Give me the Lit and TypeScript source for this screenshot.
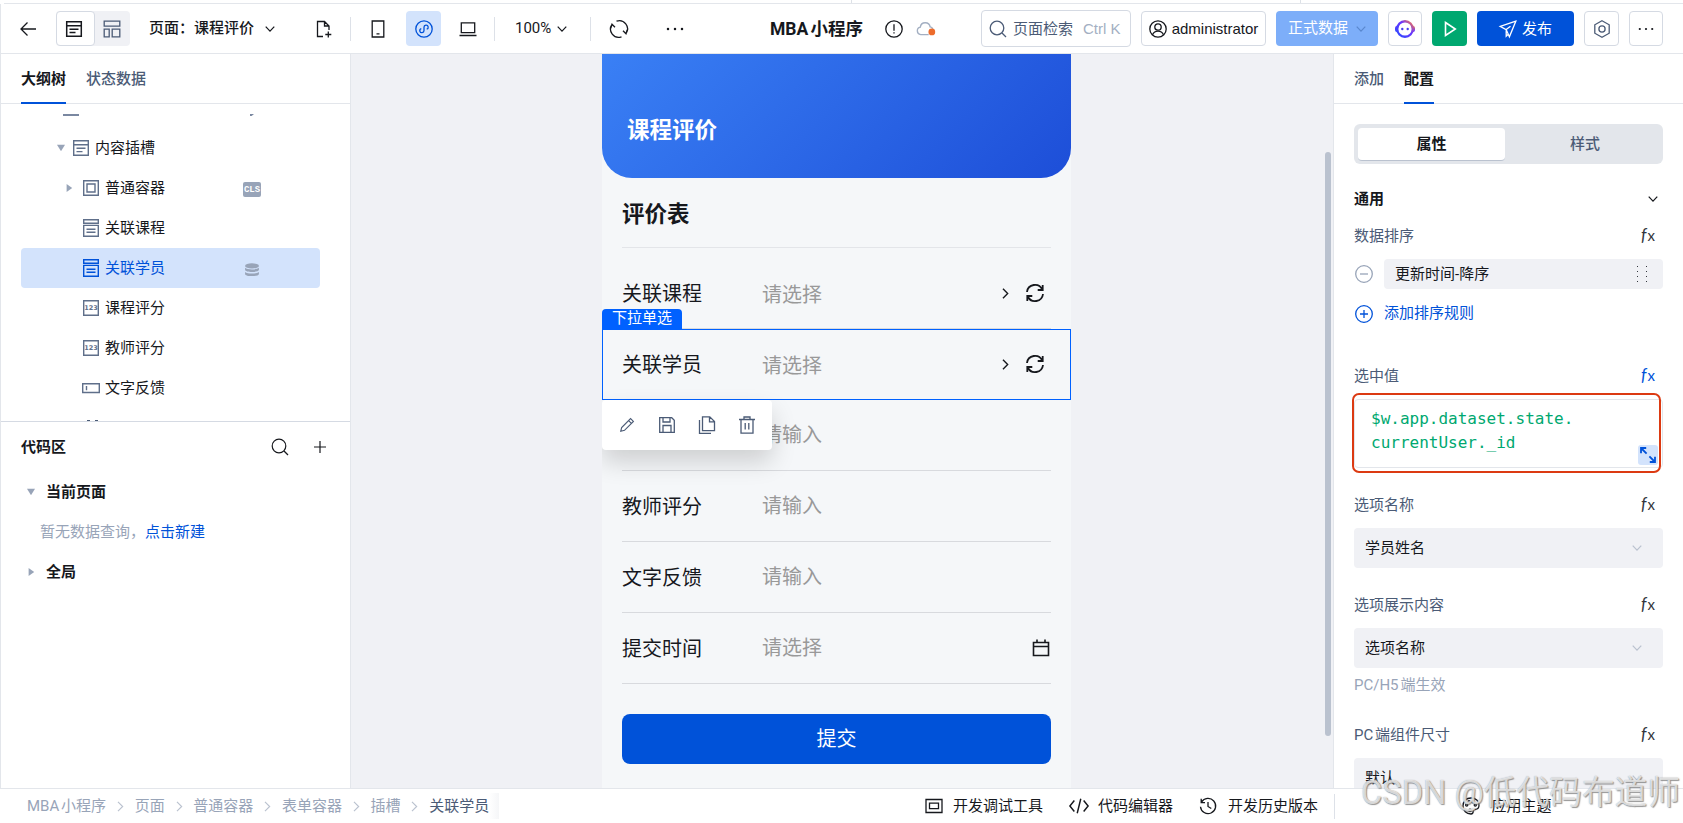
import { LitElement, html, svg, css } from "lit";
import { customElement, property } from "lit/decorators.js";
import { classMap } from "lit/directives/class-map.js";

const icons: Record<string, unknown> = {
  back: svg`<path d="M17 9H2M8.500 2.500L2 9l6.500 6.500" />`,
  doc: svg`<path d="M1.700 1.700h14.600v14.600H1.700zM1.700 5.700h14.600M4.500 9.200h9M4.500 12.600h6" />`,
  layout: svg`<path d="M1.200 1.200h15.600v5H1.200zM1.200 9.200h5v7.600h-5zM9.200 9.200h7.600v7.600H9.200z" />`,
  down: svg`<path d="M3.500 6l5.500 5.800L14.500 6" />`,
  right: svg`<path d="M5.500 2.500L12 9l-6.500 6.500" />`,
  newPage: svg`<path d="M8 16.500H2.500v-15h7L14 6v4M9.500 1.500V6H14M13.300 11.500v6M10.300 14.500h6" />`,
  phone: svg`<path d="M3.200 1h11.600v16H3.200zM7.500 13.800h3" />`,
  mini: svg`<circle cx="9" cy="9" r="8.200" /><path d="M6.300 8.600a2.100 2.100 0 1 0 2.700 2V7.200a2.100 2.100 0 1 1 2.700 2" />`,
  laptop: svg`<path d="M2.300 2.800h13.400v9.800H2.300zM.5 15.500h17" />`,
  sync: svg`<path d="M6.500 1.200A8.200 8.200 0 0 1 16 13.600M11.500 16.800A8.200 8.200 0 0 1 2 4.400M.8 8.200L2 4.200l3 3M17.200 9.800l-1.200 4-3-3" />`,
  dots: svg`<g fill="currentColor" stroke="none"><circle cx="2" cy="9" r="1.250" /><circle cx="9" cy="9" r="1.250" /><circle cx="16" cy="9" r="1.250" /></g>`,
  alert: svg`<circle cx="9" cy="9" r="8.200" /><path d="M9 4.300v6.400M9 12.200v1.300" />`,
  cloud: svg`<path d="M12 14.800H4.500a3.600 3.600 0 0 1-.4-7.100 4.700 4.700 0 0 1 9.300-.2 3.500 3.500 0 0 1 2.600 2" /><circle cx="15" cy="12.200" r="3.200" fill="#ed6c2c" stroke="none" />`,
  search: svg`<circle cx="8" cy="8" r="6.800" /><path d="M13 13l4 4" />`,
  user: svg`<circle cx="9" cy="9" r="8.200" /><circle cx="9" cy="7" r="3.200" /><path d="M3.500 14.800c1.200-2.600 3-3.600 5.500-3.600s4.300 1 5.500 3.600" />`,
  play: svg`<path d="M4.500 2.500L14.300 9l-9.800 6.500z" />`,
  send: svg`<path d="M16.800 1.200L1.200 6.300l6 3.300 3.200 7.200zM7.200 9.600l4.300-3.400M7.200 9.600v6.600l2-2" />`,
  hexagon: svg`<path d="M9 .8l7.200 4v8.400L9 17.200l-7.200-4V4.800z" /><circle cx="9" cy="9" r="3.100" />`,
  box: svg`<path d="M1.700 1.700h14.600v14.600H1.700zM5 5h8v8H5z" />`,
  select: svg`<path d="M1.700.7h14.600v3.500H1.700zM1.700 6.400h14.600v10.800H1.700zM4.500 10.200h9M4.500 13.200h9" />`,
  number: svg`<path d="M1.700 1.700h14.600v14.600H1.700z" /><text x="9" y="11.300" text-anchor="middle">123</text>`,
  input: svg`<path d="M.7 4.700h16.600v8.800H.7zM4.500 7v4.200" />`,
  db: svg`<g fill="currentColor" stroke="none"><ellipse cx="9" cy="4.400" rx="7.800" ry="2.900" /><path d="M1.200 6.600c2.500 2.500 13.100 2.500 15.600 0v2.200c0 3.300-15.600 3.300-15.600 0zM1.200 11.200c2.500 2.500 13.100 2.500 15.600 0v2.200c0 3.300-15.600 3.300-15.600 0z" /></g>`,
  plus: svg`<path d="M9 3v12M3 9h12" />`,
  refresh: svg`<path d="M1 8a8 8 0 0 1 15.200-2.500M17 10a8 8 0 0 1-15.200 2.500M16.700 1v5h-5M1.300 17v-5h5" />`,
  calendar: svg`<path d="M1.500 3.500h15v13h-15zM1.500 7.500h15M5 .5v3M13 .5v3" />`,
  pencil: svg`<path d="M2 16l1-4.200L13 1.800l3.200 3.200L6.200 15zM10.800 4l3.200 3.200" />`,
  save: svg`<path d="M1.700 1.700h12l2.600 2.600v12H1.700zM5 1.700V6h7V1.700M5 16.300V9.500h8v6.800" />`,
  copy: svg`<path d="M4.500.8h7.300l4.700 4.700v9.200h-12zM11.500.8v5h5M1.500 4v13.300h11.500" />`,
  trash: svg`<path d="M1 3.500h16M3 3.500v13.700h12V3.500M6 3.500V1h6v2.500M7.200 7v6.500M10.800 7v6.500" />`,
  minusCircle: svg`<circle cx="9" cy="9" r="8.300" /><path d="M5 9h8" />`,
  plusCircle: svg`<circle cx="9" cy="9" r="8.300" /><path d="M5 9h8M9 5v8" />`,
  expand: svg`<path d="M2 7.200V2h5.200M2 2l5.600 5.600M16 10.800V16h-5.200M16 16l-5.600-5.600" />`,
  monitor: svg`<path d="M1 2.500h16v13H1zM4.500 6.200h9v5.500h-9z" />`,
  code: svg`<path d="M4.800 4L.8 9l4 5M13.200 4l4 5-4 5M10.600 2.500l-3.200 13" />`,
  history: svg`<path d="M2.500 5.200a7.600 7.600 0 1 1-1 4.500M2.200 1.800v3.800h3.800M9 5v4.500l3.300 2" />`,
  palette: svg`<path d="M9 1c4.800 0 8 3 8 7.300 0 2.700-1.600 4-3.600 4-1.700 0-2.200.8-2.200 2 0 1.500-.5 2.700-2.200 2.700C4.300 17 1 13.600 1 9s3.200-8 8-8z" /><circle cx="4.700" cy="8" r="1.100" /><circle cx="7" cy="4.800" r="1.100" /><circle cx="11" cy="4.800" r="1.100" /><circle cx="13.300" cy="8" r="1.100" /><circle cx="8" cy="13.300" r="1.200" />`,
};

@customElement("app-icon")
export class AppIcon extends LitElement {
  @property({ type: String }) name = "";

  static styles = css`
    :host {
      display: inline-flex;
      width: 18px;
      height: 18px;
      flex: none;
    }

    svg {
      width: 100%;
      height: 100%;
      overflow: visible;
      fill: none;
      stroke: currentColor;
      stroke-width: var(--stroke, 1.3);
    }

    text {
      font: bold 6.5px "DejaVu Sans", sans-serif;
      fill: currentColor;
      stroke: none;
    }
  `;

  protected render() {
    return html`<svg viewBox="0 0 18 18">${icons[this.name]}</svg>`;
  }
}

interface TreeNode {
  label: string;
  icon: string;
  root?: boolean;
  arrow?: string;
  selected?: boolean;
  badge?: string;
}

const treeNodes: TreeNode[] = [
  { label: "内容插槽", icon: "doc", root: true, arrow: "open" },
  { label: "普通容器", icon: "box", arrow: "closed", badge: "cls" },
  { label: "关联课程", icon: "select" },
  { label: "关联学员", icon: "select", selected: true, badge: "db" },
  { label: "课程评分", icon: "number" },
  { label: "教师评分", icon: "number" },
  { label: "文字反馈", icon: "input" },
];

const formRows = [
  { label: "关联课程", hint: "请选择", kind: "select" },
  { label: "关联学员", hint: "请选择", kind: "select", selected: true },
  { label: "课程评分", hint: "请输入", kind: "input" },
  { label: "教师评分", hint: "请输入", kind: "input" },
  { label: "文字反馈", hint: "请输入", kind: "input" },
  { label: "提交时间", hint: "请选择", kind: "date" },
];

const crumbs = ["MBA小程序", "页面", "普通容器", "表单容器", "插槽", "关联学员"];

@customElement("app-root")
export class AppRoot extends LitElement {
  static styles = css`
    :host {
      display: flex;
      flex-direction: column;
      position: relative;
      width: 1683px;
      height: 823px;
      overflow: hidden;
      background: #fff;
      color: #16181d;
      font-family: Roboto, "Noto Sans CJK SC", sans-serif;
      font-size: 15px;
      line-height: 20px;
      white-space: nowrap;
      text-autospace: normal;
    }

    * {
      box-sizing: border-box;
    }

    /* header */
    .strip {
      display: flex;
      flex: none;
      height: 4px;
      margin-left: 4px;
      border-bottom: 1px solid #e3e6eb;
    }
    .strip span {
      height: 3px;
      border-right: 1px solid #dde1e7;
    }
    .strip .first {
      width: 848px;
    }
    .strip .second {
      width: 449px;
    }
    .header {
      display: flex;
      align-items: center;
      flex: none;
      height: 50px;
      padding: 0 20px 0 18px;
      border-left: 1px solid #e3e6eb;
      border-bottom: 1px solid #e3e6eb;
    }
    .views {
      display: flex;
      width: 74px;
      height: 35px;
      margin: 0 19px 0 19px;
      border-radius: 4px;
      background: #f0f1f5;
      color: #4b5b76;
    }
    .views span {
      display: flex;
      flex: 1;
      align-items: center;
      justify-content: center;
    }
    .views .on {
      padding-right: 2px;
      border: 1px solid #d5dae3;
      border-radius: 4px;
      background: #fff;
      color: #16181d;
      --stroke: 1.5;
    }
    .views .off {
      padding-right: 1px;
    }
    .page-name {
      width: 105px;
      margin-right: 9px;
      padding-bottom: 2px;
      font-weight: 500;
    }
    .small {
      width: 14px;
      height: 14px;
      --stroke: 1.6;
    }
    .new-page {
      margin: 0 17px 0 38px;
    }
    .rule {
      width: 1px;
      height: 24px;
      background: #dde1e8;
    }
    .phone {
      margin: 0 19px 0 18px;
    }
    .device-on {
      display: flex;
      align-items: center;
      justify-content: center;
      width: 35px;
      height: 35px;
      margin-right: 18px;
      border-radius: 4px;
      background: #d3e3fc;
      color: #0052d9;
    }
    .laptop {
      margin-right: 17px;
    }
    .zoom {
      width: 37px;
      margin: 0 3px 0 20px;
      padding-bottom: 2px;
    }
    .zoom-arrow {
      margin-right: 21px;
    }
    .sync {
      margin: 0 38px 0 19px;
    }
    .app-name {
      width: 93px;
      margin: 0 22px 0 86px;
      font-size: 17.500px;
      font-weight: 700;
    }
    .cloud {
      width: 19px;
      height: 19px;
      margin-left: 13px;
      color: #a3afc2;
    }
    .actions {
      display: flex;
      align-items: center;
      gap: 10px;
      margin-left: auto;
    }
    .btn {
      display: flex;
      align-items: center;
      justify-content: center;
      width: 35px;
      height: 35px;
      border: 1px solid #d5dae3;
      border-radius: 4px;
    }
    .search {
      width: 150px;
      height: 37px;
      gap: 6px;
      justify-content: flex-start;
      padding-left: 7px;
      color: #4b5b76;
      font-family: "Liberation Sans", "Noto Sans CJK SC", sans-serif;
    }
    .search .key {
      margin-left: 4px;
      color: #a3afc2;
    }
    .user {
      width: 125px;
      gap: 5px;
      font-family: "Liberation Sans", sans-serif;
    }
    .data {
      width: 102px;
      gap: 6px;
      padding-left: 2px;
      border: 0;
      background: #7daef9;
      color: #fff;
    }
    .data span {
      padding-bottom: 2px;
    }
    .data app-icon {
      color: #5a88cf;
    }
    .bot {
      width: 34px;
    }
    .bot svg {
      width: 20px;
      height: 20px;
    }
    .run {
      border: 0;
      background: #00a870;
      color: #fff;
      --stroke: 1.6;
    }
    .publish {
      width: 97px;
      gap: 5px;
      border: 0;
      background: #0052d9;
      color: #fff;
    }
    .setting {
      color: #4b5b76;
    }
    .more {
      width: 34px;
    }
    .more app-icon {
      width: 16px;
      height: 16px;
    }

    /* body */
    .body {
      display: flex;
      flex: none;
      height: 734px;
    }
    .left {
      display: flex;
      flex-direction: column;
      width: 351px;
      border-left: 1px solid #e3e6eb;
      border-right: 1px solid #e3e6eb;
    }
    .tabs {
      display: flex;
      flex: none;
      gap: 20px;
      height: 50px;
      padding-left: 20px;
      border-bottom: 1px solid #e3e6eb;
      color: #4b5b76;
      font-weight: 500;
      line-height: 50px;
    }
    .tabs .on {
      height: 50px;
      border-bottom: 2px solid #0052d9;
      color: #16181d;
      font-weight: 700;
    }
    .tree {
      flex: none;
      height: 307px;
      margin-top: 10px;
      overflow: hidden;
      padding: 0 30px 0 20px;
    }
    .cut-top {
      display: flex;
      justify-content: space-between;
      height: 14px;
      padding: 0 66px 0 42px;
    }
    .cut-top span {
      width: 16px;
      height: 2px;
      background: #7a88a1;
    }
    .cut-top .tip {
      width: 4px;
      clip-path: polygon(0 0, 100% 0, 40% 100%, 0 100%);
    }
    .cut-bottom {
      display: flex;
      gap: 5px;
      height: 20px;
      padding: 12px 0 0 66px;
    }
    .cut-bottom span {
      width: 3px;
      height: 1px;
      background: #4b5b76;
    }
    .node {
      display: flex;
      align-items: center;
      height: 40px;
      padding-left: 44px;
      border-radius: 4px;
    }
    .node.root {
      padding-left: 36px;
    }
    .node.root .arrow {
      margin-right: 7px;
    }
    .node.on {
      background: #d3e3fc;
      color: #0052d9;
    }
    .node app-icon {
      margin-right: 5px;
      color: #5f6f8a;
      --stroke: 1.4;
    }
    .node.on app-icon {
      color: #0052d9;
    }
    .node .label {
      flex: 1;
      padding-bottom: 1px;
    }
    .arrow {
      width: 8px;
      height: 8px;
      margin-right: 9px;
    }
    .arrow.open {
      background: #98a4b8;
      clip-path: polygon(0 10%, 100% 10%, 50% 90%);
    }
    .arrow.closed {
      background: #98a4b8;
      clip-path: polygon(20% 0, 90% 50%, 20% 100%);
    }
    .cls {
      width: 18px;
      height: 15px;
      margin: 3px 59px 0 0;
      border-radius: 2px;
      background: #98a4b8;
      color: #fff;
      font: bold 9px/16px "Liberation Mono", monospace;
      text-align: center;
    }
    .node.on .db {
      width: 16px;
      height: 16px;
      margin: 3px 60px 0 0;
      color: #98a4b8;
    }
    .code-head {
      display: flex;
      align-items: center;
      height: 51px;
      border-top: 1px solid #d5dae3;
      padding: 0 21px 0 20px;
      font-weight: 700;
    }
    .code-head span {
      flex: 1;
    }
    .code-head app-icon {
      --stroke: 1.2;
      margin-left: 22px;
    }
    .code-row {
      display: flex;
      align-items: center;
      height: 40px;
      padding-left: 26px;
      font-weight: 700;
    }
    .code-row .arrow {
      margin-right: 11px;
    }
    .empty {
      padding-left: 39px;
      color: #98a4b8;
      font-weight: 400;
    }
    .link {
      color: #0052d9;
    }

    /* canvas */
    .canvas {
      display: flex;
      flex: 1;
      justify-content: flex-end;
      background: #f0f1f5;
    }
    .device {
      width: 469px;
      margin-right: 254px;
      background: #f5f7f9;
      overflow: hidden;
    }
    .hero {
      display: flex;
      align-items: flex-end;
      height: 148px;
      margin-top: -24px;
      padding: 0 25px 32px;
      border-radius: 0 0 30px 30px;
      background: linear-gradient(135deg, #3b82f6, #1d4ed8);
      color: #fff;
      font-size: 22.500px;
      font-weight: 700;
      line-height: 32px;
    }
    .form-title {
      height: 70px;
      margin: 0 20px 10px;
      border-bottom: 1px solid #e3e5e9;
      font-size: 22.500px;
      font-weight: 700;
      line-height: 72px;
    }
    .row {
      position: relative;
      height: 71px;
      padding: 0 20px;
      font-size: 20px;
    }
    .field {
      display: flex;
      align-items: center;
      height: 71px;
      border-bottom: 1px solid #d8dade;
    }
    .field .name {
      width: 140px;
      padding-top: 1px;
    }
    .field .hint {
      flex: 1;
      color: #999;
    }
    .field .hint.select {
      padding-top: 3px;
    }
    .field .next {
      width: 13px;
      height: 13px;
      margin-right: 14px;
      --stroke: 1.9;
    }
    .field .reload {
      margin-right: 7px;
      --stroke: 1.8;
    }
    .field .date {
      margin-right: 1px;
      --stroke: 1.6;
    }
    .outline {
      position: absolute;
      z-index: 1;
      inset: 0;
      border: 1px solid #0061ff;
    }
    .tag {
      position: absolute;
      left: 0;
      top: -20px;
      width: 80px;
      height: 20px;
      border-radius: 4px 4px 0 0;
      background: #0061ff;
      color: #fff;
      font-size: 15px;
      line-height: 19px;
      text-align: center;
    }
    .tools {
      position: absolute;
      z-index: 2;
      left: 0;
      top: 71px;
      display: flex;
      align-items: center;
      gap: 22px;
      width: 170px;
      height: 50px;
      padding-left: 17px;
      border-radius: 4px;
      background: #fff;
      box-shadow: 0 12px 24px rgba(0, 0, 0, 0.16);
      color: #4b5b76;
    }
    .tools .pencil {
      width: 16px;
      height: 16px;
      margin-right: 1px;
    }
    .submit {
      height: 50px;
      margin: 30px 20px 0;
      border-radius: 8px;
      background: #0052d9;
      color: #fff;
      font-size: 20px;
      line-height: 50px;
      text-align: center;
    }
    .scroll {
      width: 6px;
      height: 584px;
      margin: 98px 2px 0 0;
      border-radius: 3px;
      background: #bac2cf;
    }

    /* config panel */
    .right {
      width: 350px;
      border-left: 1px solid #e3e6eb;
      overflow: hidden;
    }
    .config {
      display: flex;
      flex-direction: column;
      padding: 20px 20px 0;
    }
    .segment {
      display: flex;
      height: 40px;
      padding: 4px;
      border-radius: 6px;
      background: #e3e6eb;
      color: #4b5b76;
      font-weight: 500;
      line-height: 32px;
      text-align: center;
    }
    .segment span {
      flex: 1;
      padding-left: 6px;
    }
    .segment .on {
      flex: none;
      width: 147px;
      height: 33px;
      padding-left: 0;
      border-bottom: 1px solid #bac2cf;
      border-radius: 4px;
      background: #fff;
      color: #16181d;
      font-weight: 700;
    }
    .section {
      display: flex;
      align-items: center;
      justify-content: space-between;
      height: 20px;
      margin-top: 25px;
      padding-right: 3px;
      font-weight: 700;
    }
    .prop {
      display: flex;
      align-items: center;
      justify-content: space-between;
      height: 20px;
      padding-right: 8px;
      color: #4b5b76;
    }
    .fx {
      padding-bottom: 3px;
      color: #33363d;
      font: italic 17px/18px Lato, sans-serif;
    }
    .fx span {
      margin-left: 1px;
      font: 15px/18px Lato, sans-serif;
    }
    .fx.on {
      color: #0052d9;
    }
    .sort {
      margin-top: 17px;
    }
    .sort-rule {
      display: flex;
      align-items: center;
      gap: 11px;
      height: 30px;
      margin-top: 13px;
      padding-left: 1px;
      color: #98a4b8;
    }
    .sort-rule .value {
      display: flex;
      flex: 1;
      align-items: center;
      justify-content: space-between;
      height: 30px;
      padding: 0 16px 1px 11px;
      border-radius: 4px;
      background: #f0f1f5;
      color: #16181d;
    }
    .grip {
      display: grid;
      grid-template-columns: 1px 1px;
      gap: 4px 8px;
    }
    .grip i {
      width: 1px;
      height: 1px;
      background: #33363d;
    }
    .sort-add {
      margin-top: 10px;
      color: #0052d9;
    }
    .sort-add span {
      padding-bottom: 2px;
    }
    .selected-value {
      margin-top: 37px;
    }
    .expression {
      position: relative;
      height: 69px;
      margin-top: 13px;
      padding: 7px 16px;
      border: 1px solid #e3e6eb;
      border-radius: 4px;
      color: #00a870;
      font: 16px/24px "DejaVu Sans Mono", monospace;
    }
    .expand {
      position: absolute;
      right: 4px;
      bottom: 2px;
      display: flex;
      align-items: center;
      justify-content: center;
      width: 20px;
      height: 20px;
      border-radius: 3px;
      background: #d3e3fc;
      color: #0052d9;
      --stroke: 1.8;
    }
    .mark {
      position: absolute;
      inset: -7px 1px -6px -3px;
      border: 2px solid #dc3a12;
      border-radius: 7px;
    }
    .option {
      margin-top: 27px;
    }
    .dropdown {
      display: flex;
      align-items: center;
      justify-content: space-between;
      height: 40px;
      margin-top: 13px;
      padding: 0 19px 1px 11px;
      border-radius: 4px;
      background: #f0f1f5;
    }
    .dropdown app-icon {
      color: #bac2cf;
    }
    .note {
      height: 20px;
      margin-top: 7px;
      color: #98a4b8;
    }
    .size {
      margin-top: 30px;
    }

    /* footer */
    .footer {
      display: flex;
      align-items: center;
      flex: none;
      height: 35px;
      padding: 0 0 0 27px;
      border-top: 1px solid #e3e6eb;
    }
    .crumbs {
      display: flex;
      align-items: center;
      gap: 7.800px;
      flex: 1;
      color: #98a4b8;
    }
    .crumbs app-icon {
      width: 13px;
      height: 13px;
      --stroke: 1.6;
      color: #bac2cf;
    }
    .crumbs .last {
      color: #4b5b76;
    }
    .crumbs .fade {
      width: 10px;
      height: 26px;
      margin-left: -8px;
      background: linear-gradient(90deg, #fff, #f5f6f8);
    }
    .tool {
      display: flex;
      align-items: center;
      gap: 10px;
      margin-right: 26px;
    }
    .tool.coding {
      gap: 9px;
    }
    .tool.coding app-icon {
      width: 20px;
      height: 20px;
    }
    .tool.past {
      gap: 11px;
      margin-right: 16px;
    }
    .tool.theme {
      width: 349px;
      justify-content: center;
      gap: 11px;
      height: 25px;
      margin: 0;
      padding-right: 4px;
      border-left: 1px solid #dde1e8;
    }
    .watermark {
      position: absolute;
      right: 3px;
      bottom: 8px;
      color: rgba(255, 255, 255, 0.7);
      font-size: 32.700px;
      line-height: 44px;
      text-autospace: no-autospace;
      text-shadow: 1px 1px 1px rgba(110, 110, 110, 0.7), 0 0 1px rgba(120, 120, 120, 0.7);
    }
  `;

  private renderHeader() {
    return html`
      <div class="strip"><span class="first"></span><span class="second"></span></div>
      <div class="header">
        <app-icon name="back"></app-icon>
        <div class="views">
          <span class="on"><app-icon name="doc"></app-icon></span>
          <span class="off"><app-icon name="layout"></app-icon></span>
        </div>
        <div class="page-name">页面：课程评价</div>
        <app-icon class="small" name="down"></app-icon>
        <app-icon class="new-page" name="newPage"></app-icon>
        <div class="rule"></div>
        <app-icon class="phone" name="phone"></app-icon>
        <div class="device-on"><app-icon name="mini"></app-icon></div>
        <app-icon class="laptop" name="laptop"></app-icon>
        <div class="rule"></div>
        <div class="zoom">100%</div>
        <app-icon class="small zoom-arrow" name="down"></app-icon>
        <div class="rule"></div>
        <app-icon class="sync" name="sync"></app-icon>
        <app-icon name="dots"></app-icon>
        <div class="app-name">MBA小程序</div>
        <app-icon name="alert"></app-icon>
        <app-icon class="cloud" name="cloud"></app-icon>
        <div class="actions">
          <div class="btn search">
            <app-icon name="search"></app-icon>
            <span>页面检索</span>
            <span class="key">Ctrl K</span>
          </div>
          <div class="btn user"><app-icon name="user"></app-icon>administrator</div>
          <div class="btn data"><span>正式数据</span><app-icon class="small" name="down"></app-icon></div>
          <div class="btn bot">
            <svg viewBox="0 0 20 20">
              <defs>
                <linearGradient id="bot" x1="0" y1="1" x2="1" y2="0">
                  <stop offset="0" stop-color="#2b4bff" />
                  <stop offset="0.6" stop-color="#6a35ff" />
                  <stop offset="1" stop-color="#ff7a45" />
                </linearGradient>
              </defs>
              <rect x="0" y="7" width="20" height="6" rx="2" fill="url(#bot)" />
              <circle cx="10" cy="10" r="7.800" fill="#fff" stroke="url(#bot)" stroke-width="2.400" />
              <circle cx="7.300" cy="10" r="1.200" fill="#4a3cf0" />
              <circle cx="12.700" cy="10" r="1.200" fill="#4a3cf0" />
            </svg>
          </div>
          <div class="btn run"><app-icon name="play"></app-icon></div>
          <div class="btn publish"><app-icon name="send"></app-icon>发布</div>
          <div class="btn setting"><app-icon name="hexagon"></app-icon></div>
          <div class="btn more"><app-icon name="dots"></app-icon></div>
        </div>
      </div>
    `;
  }

  private renderNode(node: TreeNode) {
    return html`
      <div class=${classMap({ node: true, root: !!node.root, on: !!node.selected })}>
        <span class="arrow ${node.arrow ?? ""}"></span>
        <app-icon name=${node.icon}></app-icon>
        <span class="label">${node.label}</span>
        ${node.badge === "cls" ? html`<span class="cls">CLS</span>` : ""}
        ${node.badge === "db" ? html`<app-icon class="db" name="db"></app-icon>` : ""}
      </div>
    `;
  }

  private renderLeft() {
    return html`
      <div class="left">
        <div class="tabs"><span class="on">大纲树</span><span>状态数据</span></div>
        <div class="tree">
          <div class="cut-top"><span></span><span class="tip"></span></div>
          ${treeNodes.map((node) => this.renderNode(node))}
          <div class="cut-bottom"><span></span><span></span></div>
        </div>
        <div class="code-head">
          <span>代码区</span>
          <app-icon name="search"></app-icon>
          <app-icon name="plus"></app-icon>
        </div>
        <div class="code-row"><span class="arrow open"></span>当前页面</div>
        <div class="code-row empty">暂无数据查询，<span class="link">点击新建</span></div>
        <div class="code-row"><span class="arrow closed"></span>全局</div>
      </div>
    `;
  }

  private renderRow(row: (typeof formRows)[number]) {
    return html`
      <div class="row">
        <div class="field">
          <span class="name">${row.label}</span>
          <span class="hint ${row.kind}">${row.hint}</span>
          ${row.kind === "select"
            ? html`<app-icon class="next" name="right"></app-icon><app-icon class="reload" name="refresh"></app-icon>`
            : ""}
          ${row.kind === "date" ? html`<app-icon class="date" name="calendar"></app-icon>` : ""}
        </div>
        ${row.selected
          ? html`
              <div class="outline"></div>
              <div class="tag">下拉单选</div>
              <div class="tools">
                <app-icon class="pencil" name="pencil"></app-icon>
                <app-icon name="save"></app-icon>
                <app-icon name="copy"></app-icon>
                <app-icon name="trash"></app-icon>
              </div>
            `
          : ""}
      </div>
    `;
  }

  private renderFx(active = false) {
    return html`<span class=${classMap({ fx: true, on: active })}>f<span>x</span></span>`;
  }

  private renderDropdown(value: string) {
    return html`<div class="dropdown">${value}<app-icon class="small" name="down"></app-icon></div>`;
  }

  private renderRight() {
    return html`
      <div class="right">
        <div class="tabs"><span>添加</span><span class="on">配置</span></div>
        <div class="config">
          <div class="segment"><span class="on">属性</span><span>样式</span></div>
          <div class="section">通用<app-icon class="small" name="down"></app-icon></div>
          <div class="prop sort">数据排序${this.renderFx()}</div>
          <div class="sort-rule">
            <app-icon name="minusCircle"></app-icon>
            <div class="value">
              更新时间-降序
              <span class="grip">${Array.from({ length: 8 }, () => html`<i></i>`)}</span>
            </div>
          </div>
          <div class="sort-rule sort-add"><app-icon name="plusCircle"></app-icon><span>添加排序规则</span></div>
          <div class="prop selected-value">选中值${this.renderFx(true)}</div>
          <div class="expression">
            $w.app.dataset.state.<br />currentUser._id
            <span class="expand"><app-icon name="expand"></app-icon></span>
            <span class="mark"></span>
          </div>
          <div class="prop option">选项名称${this.renderFx()}</div>
          ${this.renderDropdown("学员姓名")}
          <div class="prop option">选项展示内容${this.renderFx()}</div>
          ${this.renderDropdown("选项名称")}
          <div class="note">PC/H5端生效</div>
          <div class="prop size">PC端组件尺寸${this.renderFx()}</div>
          ${this.renderDropdown("默认")}
        </div>
      </div>
    `;
  }

  private renderFooter() {
    const last = crumbs.length - 1;
    return html`
      <div class="footer">
        <div class="crumbs">
          ${crumbs.map((crumb, i) =>
            i < last
              ? html`<span>${crumb}</span><app-icon name="right"></app-icon>`
              : html`<span class="last">${crumb}</span>`
          )}
          <span class="fade"></span>
        </div>
        <div class="tool debug"><app-icon name="monitor"></app-icon>开发调试工具</div>
        <div class="tool coding"><app-icon name="code"></app-icon>代码编辑器</div>
        <div class="tool past"><app-icon name="history"></app-icon>开发历史版本</div>
        <div class="tool theme"><app-icon name="palette"></app-icon>应用主题</div>
      </div>
    `;
  }

  protected render() {
    return html`
      ${this.renderHeader()}
      <div class="body">
        ${this.renderLeft()}
        <div class="canvas">
          <div class="device">
            <div class="hero">课程评价</div>
            <div class="form-title">评价表</div>
            ${formRows.map((row) => this.renderRow(row))}
            <div class="submit">提交</div>
          </div>
          <div class="scroll"></div>
        </div>
        ${this.renderRight()}
      </div>
      ${this.renderFooter()}
      <div class="watermark">CSDN @低代码布道师</div>
    `;
  }
}
